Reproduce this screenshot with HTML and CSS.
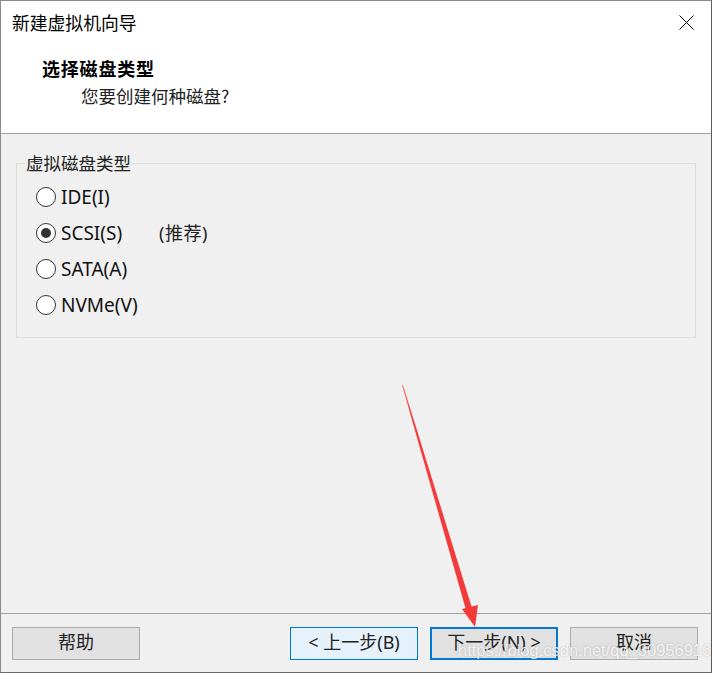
FILE: index.html
```html
<!DOCTYPE html>
<html lang="zh-CN">
<head>
<meta charset="utf-8">
<title>新建虚拟机向导</title>
<link rel="stylesheet" href="styles.css">
</head>
<body>
<div class="window">
  <div class="header">
    <div class="titlebar">
      <span class="title">新建虚拟机向导</span>
      <svg class="close" width="15" height="15" viewBox="0 0 15 15"><path d="M0.5 0.5 L14.5 14.5 M14.5 0.5 L0.5 14.5" stroke="#000" stroke-width="1" fill="none"/></svg>
    </div>
    <div class="heading">选择磁盘类型</div>
    <div class="subtitle">您要创建何种磁盘?</div>
  </div>
  <div class="content">
    <fieldset class="group">
      <legend>虚拟磁盘类型</legend>
      <div class="options">
        <div class="opt"><span class="radio"></span><span class="lbl">IDE(I)</span></div>
        <div class="opt"><span class="radio checked"></span><span class="lbl wide">SCSI(S)</span><span class="rec">(推荐)</span></div>
        <div class="opt"><span class="radio"></span><span class="lbl">SATA(A)</span></div>
        <div class="opt"><span class="radio"></span><span class="lbl">NVMe(V)</span></div>
      </div>
    </fieldset>
  </div>
  <div class="footer">
    <div class="btn">帮助</div>
    <div class="spacer"></div>
    <div class="btn hover">&lt; 上一步(B)</div>
    <div class="btn default">下一步(N) &gt;</div>
    <div class="btn">取消</div>
  </div>
  <svg class="arrow" width="712" height="673" viewBox="0 0 712 673">
    <defs>
      <linearGradient id="g" x1="402" y1="386" x2="470" y2="610" gradientUnits="userSpaceOnUse">
        <stop offset="0" stop-color="#ff6a6a"/>
        <stop offset="0.15" stop-color="#f53d3d"/>
        <stop offset="1" stop-color="#f23a3a"/>
      </linearGradient>
    </defs>
    <polygon points="402,385 403,385 472,608 466,610" fill="url(#g)"/>
    <polygon points="462,609 478,605 475,627" fill="#f23a3a"/>
  </svg>
  <div class="watermark">https://blog.csdn.net/qq_30956916</div>
</div>
</body>
</html>
```
FILE: styles.css
```css
html, body {
  margin: 0;
  padding: 0;
}
body {
  width: 712px;
  height: 673px;
  overflow: hidden;
}
.window {
  position: relative;
  width: 712px;
  height: 673px;
  box-sizing: border-box;
  border: 1px solid #8a8a8a;
  border-right-color: #5c5c5c;
  border-bottom-color: #6a6a6a;
  background: #f0f0f0;
  display: flex;
  flex-direction: column;
  font-family: "Noto Sans", "Noto Sans CJK SC", sans-serif;
  color: #000;
}
.header {
  height: 132px;
  flex: none;
  background: #fff;
  border-bottom: 1px solid #a0a0a0;
}
.titlebar {
  display: flex;
  align-items: center;
  justify-content: space-between;
  margin-top: 9px;
  height: 24px;
  padding-left: 11px;
  padding-right: 17px;
}
.title {
  font-family: "Noto Sans CJK SC", sans-serif;
  font-size: 17.8px;
  line-height: 24px;
}
.close {
  display: block;
}
.heading {
  margin-top: 22px;
  padding-left: 41px;
  font-family: "Noto Sans CJK SC", sans-serif;
  font-weight: bold;
  font-size: 18px;
  line-height: 24px;
  letter-spacing: 0.8px;
}
.subtitle {
  margin-top: 4px;
  padding-left: 80px;
  font-family: "Noto Sans CJK SC", sans-serif;
  font-size: 17.5px;
  line-height: 24px;
  color: #222;
}
.content {
  flex: 1;
  padding: 19px 15px 0 15px;
}
.group {
  margin: 0;
  padding: 0 0 14px 8px;
  border: 1px solid #dcdcdc;
  min-width: 0;
}
.group legend {
  padding: 0 1px;
  font-family: "Noto Sans CJK SC", sans-serif;
  font-size: 17.5px;
  line-height: 20px;
  color: #222;
}
.options {
  margin-top: 6px;
  padding-left: 11px;
}
.opt {
  display: flex;
  align-items: center;
  height: 36px;
  font-size: 19px;
  color: #111;
}
.radio {
  width: 20px;
  height: 20px;
  box-sizing: border-box;
  border: 1px solid #333;
  border-radius: 50%;
  background: #fff;
  display: flex;
  align-items: center;
  justify-content: center;
  margin-right: 5px;
}
.radio.checked::after {
  content: "";
  width: 10px;
  height: 10px;
  border-radius: 50%;
  background: #333;
}
.lbl {
  line-height: 24px;
}
.lbl.wide {
  width: 98px;
}
.rec {
  font-family: "Noto Sans", "Noto Sans CJK SC", sans-serif;
  font-size: 18px;
  line-height: 24px;
  letter-spacing: 0.5px;
  color: #222;
}
.footer {
  flex: none;
  border-top: 1px solid #a0a0a0;
  padding: 13px 13px 12px 11px;
  display: flex;
  gap: 12px;
}
.spacer {
  flex: 1;
}
.btn {
  width: 128px;
  height: 33px;
  box-sizing: border-box;
  border: 1px solid #adadad;
  background: #e1e1e1;
  display: flex;
  align-items: center;
  justify-content: center;
  padding-bottom: 3px;
  font-size: 18px;
  line-height: 24px;
  color: #222;
  font-family: "Noto Sans", "Noto Sans CJK SC", sans-serif;
}
.btn.hover {
  border-color: #0078d7;
  background: #e5f1fb;
}
.btn.default {
  border: 2px solid #0078d7;
}
.arrow {
  position: absolute;
  left: -1px;
  top: -1px;
  pointer-events: none;
}
.watermark {
  position: absolute;
  left: 457px;
  top: 639px;
  font-family: "Liberation Sans", Arial, sans-serif;
  font-size: 16.5px;
  line-height: 20px;
  color: rgba(255, 255, 255, 0.8);
  text-shadow: 0 0 2px rgba(110, 110, 110, 0.45);
  white-space: nowrap;
}
```
